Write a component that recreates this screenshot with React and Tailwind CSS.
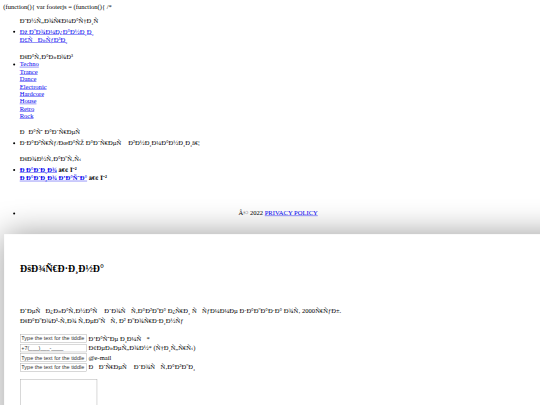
import React from "react";

// utf-8 bytes shown as windows-1252, the way the broken page renders them
const cp1252 = {
  0x80: "€", 0x82: "‚", 0x83: "ƒ", 0x84: "„", 0x85: "…", 0x86: "†", 0x87: "‡",
  0x88: "ˆ", 0x89: "‰", 0x8a: "Š", 0x8b: "‹", 0x8c: "Œ", 0x8e: "Ž", 0x91: "‘",
  0x92: "’", 0x93: "“", 0x94: "”", 0x95: "•", 0x96: "–", 0x97: "—", 0x98: "˜",
  0x99: "™", 0x9a: "š", 0x9b: "›", 0x9c: "œ", 0x9e: "ž", 0x9f: "Ÿ",
};
const moji = (s) =>
  Array.from(new TextEncoder().encode(s))
    .map((b) => cp1252[b] || String.fromCharCode(b))
    .join("");

const genres = ["Techno", "Trance", "Dance", "Electronic", "Hardcore", "House", "Retro", "Rock"];

const fields = [
  { value: "Type the text for the tiddle", label: moji("Ваше имя*") },
  { value: "+7(___)___-____", label: moji("Телефон* (цифры)") },
  { value: "Type the text for the tiddle", label: "@e-mail" },
  { value: "Type the text for the tiddle", label: moji("Адрес доставки") },
];

function Link({ children, className = "" }) {
  return (
    <a href="#" className={`text-[#0000ee] underline ${className}`}>
      {children}
    </a>
  );
}

export default function App() {
  return (
    <div className="h-screen w-screen overflow-hidden bg-white">
      <div className="w-[1317px] origin-top-left scale-[0.41] p-2 font-['Liberation_Serif',serif] text-[16px] leading-[normal] text-black">
        <div>{"(function(){ var footerjs = (function(){ /*"}</div>

        {/* Info */}
        <div className="pl-10 mt-[13px]">
          <div>{moji("Информация")}</div>
          <ul className="list-disc mt-[8px]">
            <li>
              <Link>{moji("О компании")}</Link>
              <br />
              <Link>{moji("Услуги")}</Link>
            </li>
          </ul>
        </div>

        {/* Catalog */}
        <div className="pl-10 mt-[22px]">
          <div>{moji("Каталог")}</div>
          <ul className="list-disc mt-[1px]">
            <li>
              {genres.map((g) => (
                <React.Fragment key={g}>
                  <Link>{g}</Link>
                  <br />
                </React.Fragment>
              ))}
            </li>
          </ul>
        </div>

        {/* Address */}
        <div className="pl-10 mt-[19px]">
          <div>{moji("Наш адрес")}</div>
          <ul className="list-disc mt-[6px]">
            <li>{moji("завру/Маю адрес внимании…")}</li>
          </ul>
        </div>

        {/* Contacts */}
        <div className="pl-10 mt-[20px]">
          <div>{moji("Контакты")}</div>
          <ul className="list-disc mt-[8px] font-bold">
            <li className="mb-[3px]">
              <Link>{moji("Радио")}</Link> {moji("•")} Ï˜²
            </li>
            <div>
              <Link>{moji("Радио Ваша")}</Link> {moji("•")} Ï˜²
            </div>
          </ul>
        </div>

        {/* Footer */}
        <ul className="list-disc pl-10 mt-[67px]">
          <li className="text-center">
            {moji("©")} 2022 <Link>PRIVACY POLICY</Link>
          </li>
        </ul>

        {/* Cart */}
        <div className="ml-[2px] mt-[42px] w-[1400px] h-[600px] bg-white shadow-[0_0_75px_rgba(0,0,0,0.4)] pl-[39px] pt-[72px]">
          <h2 className="text-[24px] font-bold leading-[normal]">{moji("Корзина")}</h2>
          <div className="mt-[77px] leading-6">
            <p>{moji("Бесплатная доставка при сумме заказа от 2000руб.")}</p>
            <p>{moji("Какой-то текст в корзину")}</p>
          </div>
          <div className="mt-[20px] flex flex-col gap-[3px]">
            {fields.map((f, i) => (
              <div key={i} className="flex items-center gap-[4px]">
                <input
                  readOnly
                  value={f.value}
                  className="w-[163px] h-[20px] border border-[#a0a0a0] px-[2px] font-['Liberation_Sans',sans-serif] text-[13.33px] text-[#333]"
                />
                <span>{f.label}</span>
              </div>
            ))}
          </div>
          <textarea
            readOnly
            className="mt-[19px] block w-[188px] h-[120px] border border-[#a0a0a0]"
          />
        </div>
      </div>
    </div>
  );
}
